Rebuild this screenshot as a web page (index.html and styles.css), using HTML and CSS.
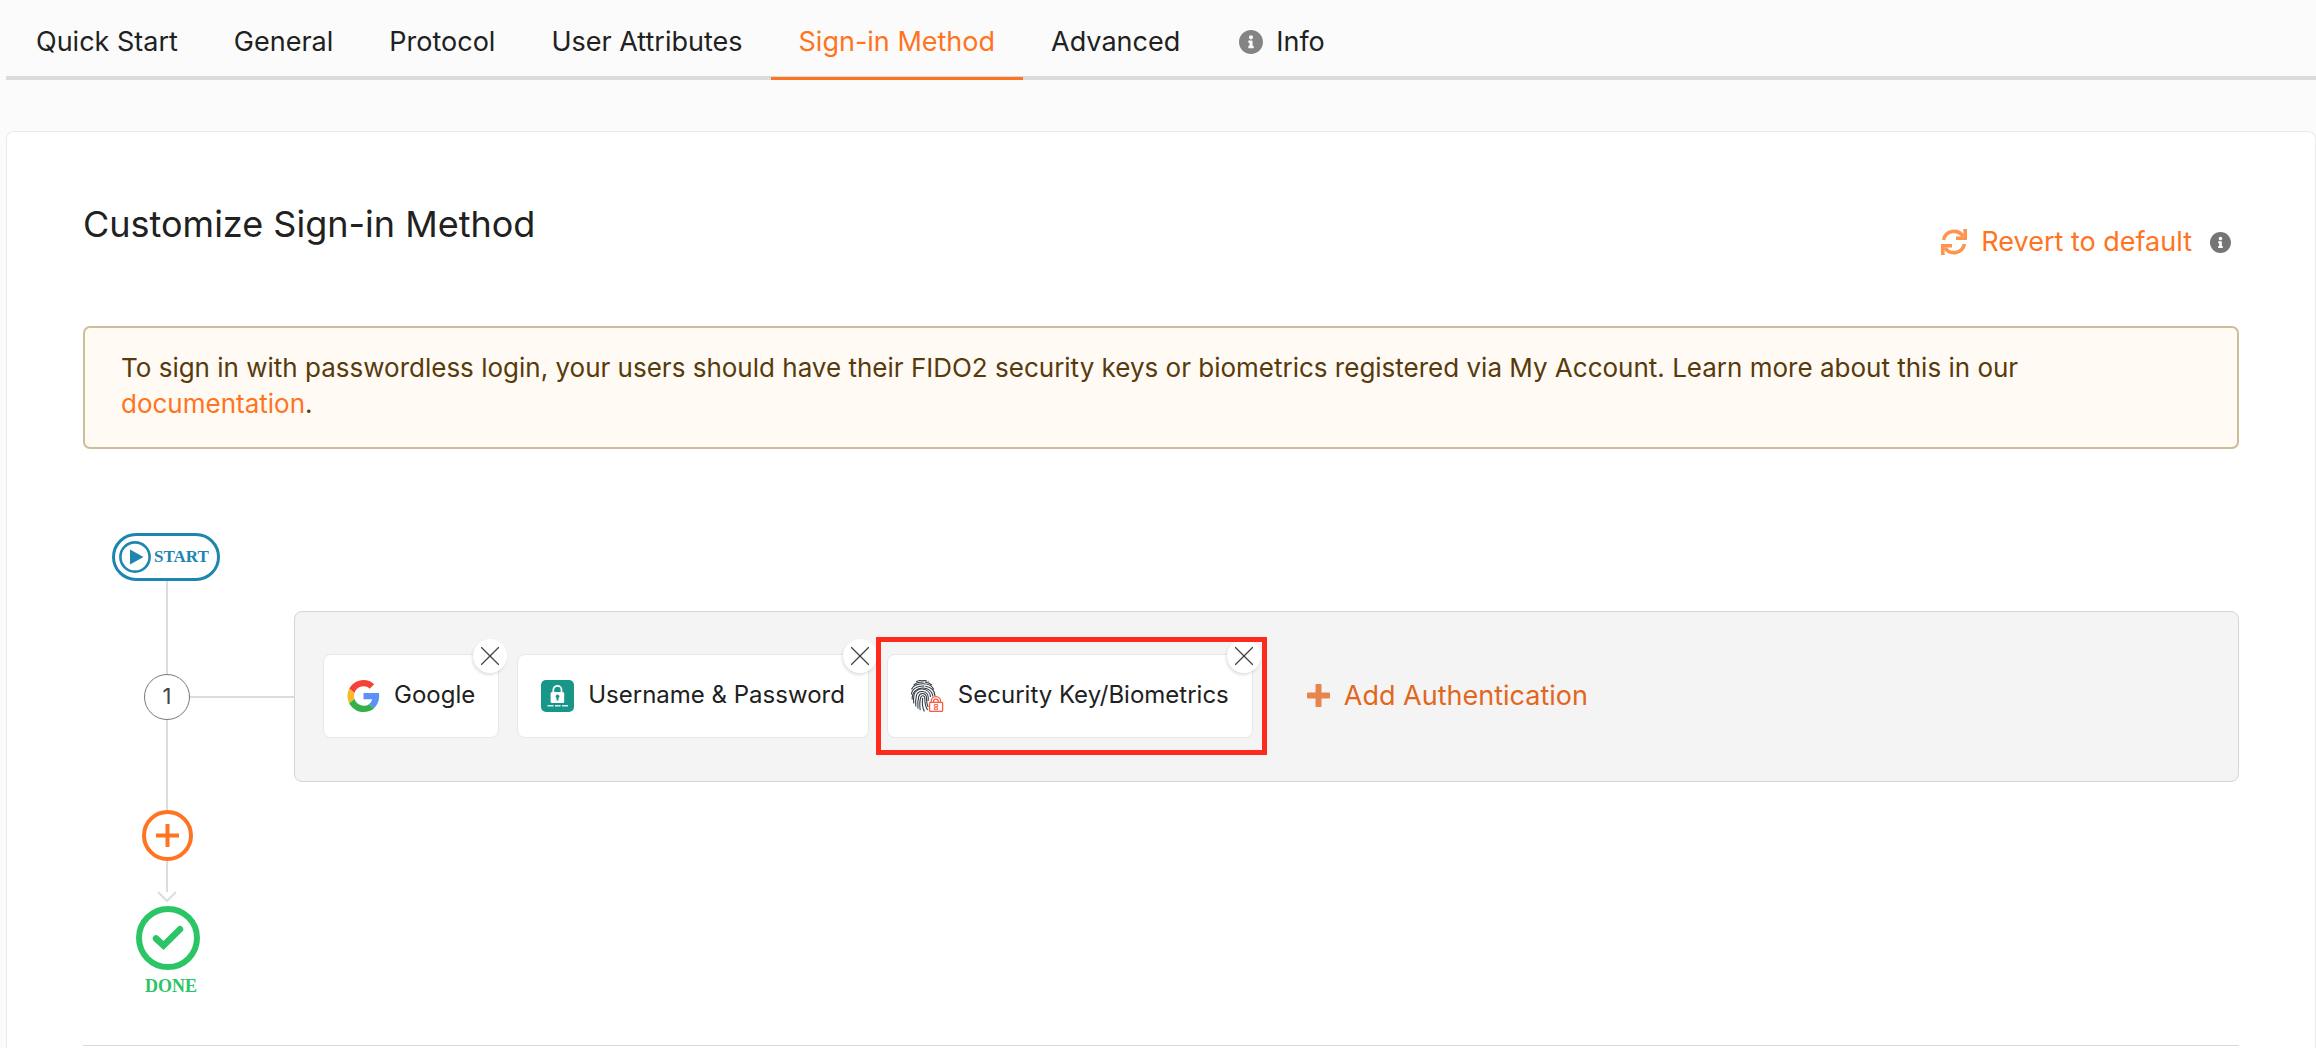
FILE: index.html
```html
<!DOCTYPE html>
<html lang="en">
<head>
<meta charset="utf-8">
<title>Customize Sign-in Method</title>
<meta name="viewport" content="width=device-width, initial-scale=1">
<link rel="stylesheet" href="styles.css">
</head>
<body>
<svg class="sprite" aria-hidden="true">
  <symbol id="info" viewBox="8 8 496 496"><path d="M256 8C119.043 8 8 119.083 8 256c0 136.997 111.043 248 248 248s248-111.003 248-248C504 119.083 392.957 8 256 8zm0 110c23.196 0 42 18.804 42 42s-18.804 42-42 42-42-18.804-42-42 18.804-42 42-42zm56 254c0 6.627-5.373 12-12 12h-88c-6.627 0-12-5.373-12-12v-24c0-6.627 5.373-12 12-12h12v-64h-12c-6.627 0-12-5.373-12-12v-24c0-6.627 5.373-12 12-12h64c6.627 0 12 5.373 12 12v100h12c6.627 0 12 5.373 12 12v24z"/></symbol>
  <symbol id="cross" viewBox="0 0 18 18"><path d="M0 0 18 18M18 0 0 18" fill="none" stroke="#444" stroke-width="1.3"/></symbol>
</svg>
<nav class="tabs" aria-label="Application settings">
  <a class="tab" href="#quick-start">Quick Start</a>
  <a class="tab" href="#general">General</a>
  <a class="tab" href="#protocol">Protocol</a>
  <a class="tab" href="#attributes">User Attributes</a>
  <a class="tab tab-active" href="#sign-in" aria-current="page">Sign-in Method</a>
  <a class="tab" href="#advanced">Advanced</a>
  <a class="tab" href="#info-tab"><svg class="icon-info" aria-hidden="true"><use href="#info"/></svg>Info</a>
</nav>
<main class="panel">
  <header class="panel-head">
    <h1 class="title">Customize Sign-in Method</h1>
    <div class="revert">
      <button class="link-button" type="button">
        <svg class="icon-refresh" viewBox="0 0 26 26" aria-hidden="true"><g fill="none" stroke="currentColor" stroke-width="3.6"><path d="M2.6 11A10.6 10.6 0 0 1 22 7.4"/><path d="M23.4 15A10.6 10.6 0 0 1 4 18.6"/></g><path fill="currentColor" d="M22.4 0H26v11H15V7.6h7.4zM3.6 26H0V15h11v3.4H3.6z"/></svg>
        Revert to default
      </button>
      <svg class="icon-info icon-info-small" role="img" aria-label="Help"><use href="#info"/></svg>
    </div>
  </header>
  <p class="notice">To sign in with passwordless login, your users should have their FIDO2 security keys or biometrics registered via My Account. Learn more about this in our <a class="link" href="#docs">documentation</a>.</p>

  <section class="flow" aria-label="Sign-in steps">
    <div class="track track-start">
      <div class="start">
        <svg class="icon-play" viewBox="0 0 32 32" aria-hidden="true"><circle cx="16" cy="16" r="14.6" fill="none" stroke="currentColor" stroke-width="2.6"/><path fill="currentColor" d="M11 8.500 24.500 16 11 23.500z"/></svg>
        START
      </div>
      <div class="line"></div>
    </div>

    <div class="step">
      <div class="track">
        <div class="line"></div>
        <div class="number">1</div>
        <div class="line"></div>
      </div>
      <div class="connector"></div>
      <div class="options">
        <div class="option">
          <svg class="option-icon" viewBox="0 0 48 48" aria-hidden="true"><path fill="#f44336" d="M24 9.500c3.540 0 6.710 1.220 9.210 3.600l6.850-6.850C35.900 2.380 30.470 0 24 0 14.620 0 6.510 5.380 2.560 13.220l7.980 6.190C12.430 13.720 17.740 9.500 24 9.500z"/><path fill="#5a93f5" d="M47.500 24.550c0-1.570-.15-3.560-.38-5.050H24v9.520h12.940c-.58 2.960-2.260 5.480-4.780 7.180l7.730 6c4.510-4.180 7.610-10.360 7.610-17.650z"/><path fill="#fbb829" d="M10.530 28.590c-.48-1.450-.76-2.990-.76-4.590s.27-3.140.76-4.590l-7.980-6.190C.92 16.460 0 20.120 0 24c0 3.880.92 7.540 2.560 10.780l7.970-6.190z"/><path fill="#33b04a" d="M24 48c6.480 0 11.930-2.130 15.890-5.810l-7.730-6c-2.150 1.450-4.920 2.300-8.160 2.300-6.260 0-11.570-4.220-13.470-9.910l-7.980 6.190C6.510 42.620 14.620 48 24 48z"/></svg>
          <span class="option-name">Google</span>
          <button class="remove" type="button" aria-label="Remove Google"><svg class="icon-cross" aria-hidden="true"><use href="#cross"/></svg></button>
        </div>
        <div class="option">
          <svg class="option-icon" viewBox="0 0 33 32" aria-hidden="true"><rect width="33" height="32" rx="5" fill="#189688"/><path d="M12.300 13V10a4.100 4.100 0 0 1 8.200 0v3" fill="none" stroke="#fff" stroke-width="1.700"/><rect x="9.600" y="12" width="13.600" height="11" rx="1.500" fill="#fff"/><path d="M15.500 20.500v-2.400a1.900 1.900 0 1 1 2 0v2.400z" fill="#189688"/><path d="M6.500 25.700h6M14 25.700h5.600M21 25.700h6" stroke="#d5efec" stroke-width="1.500"/></svg>
          <span class="option-name">Username &amp; Password</span>
          <button class="remove" type="button" aria-label="Remove Username &amp; Password"><svg class="icon-cross" aria-hidden="true"><use href="#cross"/></svg></button>
        </div>
        <div class="option option-marked">
          <svg class="option-icon" viewBox="0 0 33 32" aria-hidden="true">
            <g fill="none" stroke="#2f3742" stroke-width="1.050">
              <path d="M5 1.900C8 .2 14 0 17.500 1.600M2.500 5.200C7 .9 16 .8 21 5.200" stroke-dasharray="11 1"/>
              <path d="M.5 9.500C3.500 2 19.500 1.500 22.800 9.500"/>
              <path d="M.5 14.500C.7 3.500 23.500 2.500 24 16" stroke-dasharray="17 1"/>
              <path d="M1.200 19.500C.5 5 21 4.500 21.800 16.500"/>
              <path d="M2.800 23.500C2.300 19 2.500 17 3 15c1.500-8.500 16-8 16.500 2"/>
              <path d="M4.800 26.500C4.300 20 4.800 18 5.400 15.500c1.500-6 11.700-5.500 11.900 2.500l-.2 3"/>
              <path d="M7 28.700C6.400 22 7 19 7.700 16.500c1.300-4.500 7.600-4 7.800 1.500 0 4 .3 6.500 1.600 9"/>
              <path d="M9.200 30.200C8.400 24 8.900 20 9.700 17.500c.8-2.500 3.900-2.300 4.100.7 0 5 .3 8 2.800 11.800"/>
              <path d="M11.700 17.800c-.8 5-.4 9.500 1.700 13.800"/>
            </g>
            <path d="M18 18h9v4h-9z" fill="#fff"/>
            <path d="M20.200 22.500v-1.200a4.700 4.700 0 0 1 9.400 0v1.200M22.500 22.500v-1a2.400 2.400 0 0 1 4.800 0v1" fill="none" stroke="#fb5a3e" stroke-width="1.300"/>
            <rect x="18.600" y="22.400" width="13" height="9" rx=".8" fill="#fff" stroke="#fb5a3e" stroke-width="1.300"/>
            <path d="M23.300 24.500h3.300v2.200h-3.300zM23.300 27.700h3.300v1.900h-3.300z" fill="none" stroke="#fb5a3e" stroke-width=".9"/>
          </svg>
          <span class="option-name">Security Key/Biometrics</span>
          <button class="remove" type="button" aria-label="Remove Security Key/Biometrics"><svg class="icon-cross" aria-hidden="true"><use href="#cross"/></svg></button>
        </div>
        <button class="link-button add" type="button">
          <svg class="icon-plus" viewBox="0 0 23 23" aria-hidden="true"><path fill="currentColor" d="M9.500 0h4q1 0 1 1v7.500h7.500q1 0 1 1v4q0 1-1 1h-7.500V22q0 1-1 1h-4q-1 0-1-1v-7.500H1q-1 0-1-1v-4q0-1 1-1h7.500V1q0-1 1-1z"/></svg>
          Add Authentication
        </button>
      </div>
    </div>

    <div class="track">
      <div class="line line-short"></div>
      <button class="add-step" type="button" aria-label="Add step"><svg class="icon-plus" viewBox="0 0 23 23" aria-hidden="true"><path d="M11.500 0v23M0 11.500h23" stroke="currentColor" stroke-width="4"/></svg></button>
      <div class="line line-end"></div>
      <svg class="icon-arrow" viewBox="0 0 20 12" aria-hidden="true"><path d="M1 1 10 10 19 1" fill="none" stroke="#ddd" stroke-width="2"/></svg>
      <svg class="icon-done" viewBox="0 0 64 64" aria-hidden="true"><circle cx="32" cy="32" r="29" fill="none" stroke="currentColor" stroke-width="6"/><path d="M20 32.500 27.500 39.500 44 23.200" fill="none" stroke="currentColor" stroke-width="6.500" stroke-linecap="round"/></svg>
      <div class="done">DONE</div>
    </div>
  </section>
  <hr class="rule">
</main>
</body>
</html>
```
FILE: styles.css
```css
* { box-sizing: border-box; }

body {
  margin: 0;
  min-height: 100vh;
  padding-left: 6px;
  display: flex;
  flex-direction: column;
  background: #fbfbfb;
  color: #212121;
  font: 27px/36px Inter, "Liberation Sans", sans-serif;
}

.sprite { position: absolute; width: 0; height: 0; }
svg { flex: none; display: block; }
button { font: inherit; cursor: pointer; }

/* Tabs */
.tabs {
  display: flex;
  height: 80px;
  padding-left: 2px;
  border-bottom: 4px solid #dbdbdb;
}
.tab {
  display: flex;
  align-items: center;
  height: 80px;
  padding: 6px 28px 0;
  border-bottom: 3px solid transparent;
  color: inherit;
  text-decoration: none;
  white-space: nowrap;
}
.tab-active { color: #ff7420; border-color: #ff7420; }
.icon-info { width: 24px; height: 24px; margin: 0 13px 0 3px; fill: #848484; }

/* Panel */
.panel {
  flex: 1;
  margin-top: 51px;
  padding: 70px 76px 0;
  background: #fff;
  border: 1px solid #eaeaea;
  border-bottom: 0;
  border-radius: 8px 8px 0 0;
}
.panel-head {
  display: flex;
  justify-content: space-between;
  height: 58px;
  margin-bottom: 66px;
}
.title { margin: 0; font-size: 36px; line-height: 44px; font-weight: 400; }
.revert { display: flex; align-items: center; align-self: flex-end; gap: 18px; padding-right: 8px; }
.link-button {
  display: flex;
  align-items: center;
  gap: 14px;
  padding: 0;
  border: 0;
  background: none;
  color: #ff7420;
  white-space: nowrap;
}
.icon-refresh { width: 26px; height: 26px; color: #ff9450; }
.icon-info-small { width: 21px; height: 21px; margin: 0; fill: #757575; }

.notice {
  margin: 0 0 84px;
  padding: 22px 36px 25px;
  border: 2px solid #cdbd98;
  border-radius: 7px;
  background: #fffaf4;
  color: #573b0c;
  font-size: 26px;
}
.link { color: #ff7420; text-decoration: none; }

/* Flow */
.track {
  display: flex;
  flex-direction: column;
  align-items: center;
  width: 168px;
}
.track-start { height: 78px; }
.line { flex: 1; width: 2px; background: #ddd; }
.line-short { flex: none; height: 28px; }
.line-end { flex: none; height: 31px; }
.start {
  display: flex;
  align-items: center;
  gap: 3px;
  width: 108px;
  height: 48px;
  margin-right: 2px;
  padding-left: 4px;
  border: 3px solid #1c86b0;
  border-radius: 24px;
  color: #1c86b0;
  font: bold 17px/20px "Liberation Serif", serif;
}
.icon-play { width: 32px; height: 32px; }

.step { display: flex; align-items: stretch; }
.number {
  width: 46px;
  height: 46px;
  border: 1px solid #777;
  border-radius: 50%;
  color: #444;
  font-size: 22px;
  line-height: 42px;
  text-align: center;
}
.connector {
  align-self: center;
  width: 104px;
  height: 2px;
  margin-left: -61px;
  background: #ddd;
}
.options {
  flex: 1;
  display: flex;
  align-items: center;
  gap: 18px;
  height: 171px;
  padding: 0 0 2px 28px;
  border: 1px solid #d5d5d5;
  border-radius: 8px;
  background: #f4f4f4;
}
.option {
  position: relative;
  display: flex;
  align-items: center;
  gap: 14px;
  height: 84px;
  padding: 0 23px;
  border: 1px solid #e8e8e8;
  border-radius: 8px;
  background: #fff;
  font-size: 24px;
  white-space: nowrap;
}
.option-icon { width: 33px; height: 32px; }
.option-name { padding-bottom: 2px; }
.remove {
  position: absolute;
  top: -16px;
  right: -9px;
  display: grid;
  place-items: center;
  width: 34px;
  height: 34px;
  padding: 0;
  border: 0;
  border-radius: 50%;
  background: #fff;
  box-shadow: -1px 2px 3px rgba(0, 0, 0, .12);
}
.icon-cross { width: 18px; height: 18px; }
.option-marked::after {
  content: "";
  position: absolute;
  inset: -18px -15px -18px -12px;
  border: 5px solid #ff2a1c;
  pointer-events: none;
}
.add { margin-left: 36px; color: #e2671d; }
.add .icon-plus { color: #e8854c; }
.icon-plus { width: 23px; height: 23px; }

.add-step {
  display: grid;
  place-items: center;
  width: 51px;
  height: 51px;
  padding: 0;
  border: 4px solid #ff7420;
  border-radius: 50%;
  background: #fff;
  color: #ff7420;
}
.icon-arrow { width: 20px; height: 12px; margin-top: -1px; }
.icon-done { width: 64px; height: 64px; margin: 3px 0 0 2px; color: #2bc565; }
.done {
  margin: 6px 0 49px 8px;
  color: #2bc565;
  font: bold 18px/20px "Liberation Serif", serif;
}
.rule { margin: 0; border: 0; border-top: 1px solid #d9d9d9; }
```
